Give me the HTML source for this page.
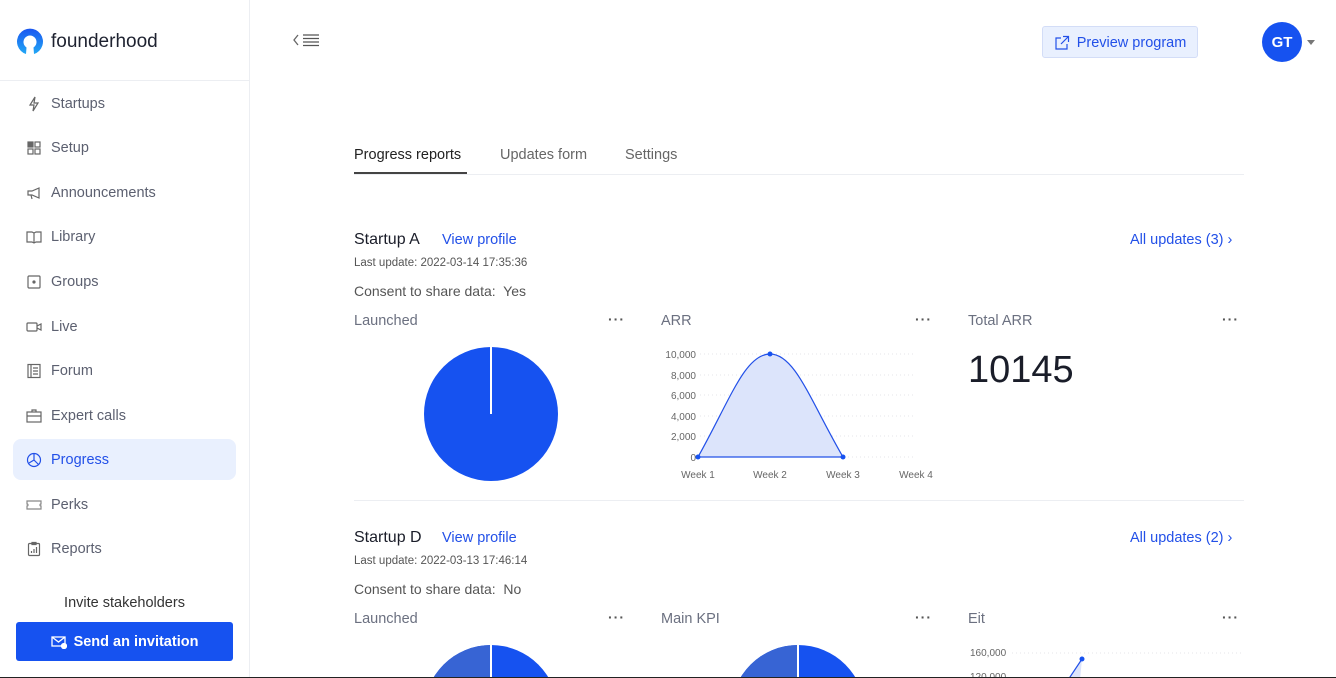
<!DOCTYPE html>
<html style="overflow:hidden;width:1336px;height:678px"><head><meta charset="utf-8"><style>
*{box-sizing:border-box;margin:0;padding:0}
body{width:1336px;height:678px;overflow:hidden;background:#fff;font-family:"Liberation Sans",sans-serif;position:relative;color:#333}
.a{position:absolute;white-space:nowrap}
.side{position:absolute;left:0;top:0;width:250px;height:678px;border-right:1px solid #eceef2}
.nav{position:absolute;left:26px;font-size:14.5px;color:#5c6070;display:flex;align-items:center}
.nav svg{width:16px;height:16px;margin-right:9px}
.g{color:#6b7080;font-size:14px}
.dots{position:absolute;font-size:14px;color:#555;letter-spacing:1px;font-weight:bold}
</style></head><body>
<div class="side">
 <svg class="a" style="left:16px;top:28px" width="28" height="28" viewBox="0 0 28 28"><defs><linearGradient id="lg" x1="0" y1="0" x2="0" y2="1"><stop offset="0" stop-color="#1a56f0"/><stop offset="1" stop-color="#22a8f5"/></linearGradient></defs><path d="M10 26 A13 13 0 1 1 18 26 L17.5 19.5 A6.5 6.5 0 1 0 10.5 19.5 Z" fill="url(#lg)"/></svg>
 <div class="a" style="left:51px;top:31px;font-size:19px;color:#1e2230">founderhood</div>
 <div class="a" style="left:0;top:80px;width:249px;height:1px;background:#eceef2"></div>
 <div class="a" style="left:13px;top:439px;width:223px;height:41px;background:#e9f0fe;border-radius:8px"></div>
 <div class="nav" style="top:96px"><svg viewBox="0 0 16 16" fill="none" stroke="#666" stroke-width="1.2"><path d="M9 1 4 9h4l-1 6 5-8H8z"/></svg>Startups</div>
 <div class="nav" style="top:140px"><svg viewBox="0 0 16 16" fill="none" stroke="#666" stroke-width="1.2"><rect x="2" y="2" width="5" height="5" fill="#666"/><rect x="9" y="2" width="5" height="5"/><rect x="2" y="9" width="5" height="5"/><rect x="9" y="9" width="5" height="5"/></svg>Setup</div>
 <div class="nav" style="top:185px"><svg viewBox="0 0 16 16" fill="none" stroke="#666" stroke-width="1.2"><path d="M2 6h4l7-3v10L6 10H2zM5 10l1 4"/></svg>Announcements</div>
 <div class="nav" style="top:229px"><svg viewBox="0 0 16 16" fill="none" stroke="#666" stroke-width="1.2"><path d="M1 3h5l2 1 2-1h5v10h-5l-2 1-2-1H1zM8 4v10"/></svg>Library</div>
 <div class="nav" style="top:274px"><svg viewBox="0 0 16 16" fill="none" stroke="#666" stroke-width="1.2"><rect x="2" y="2" width="12" height="12" rx="1"/><circle cx="8" cy="8" r="1" fill="#666"/></svg>Groups</div>
 <div class="nav" style="top:319px"><svg viewBox="0 0 16 16" fill="none" stroke="#666" stroke-width="1.2"><rect x="1" y="4" width="10" height="8" rx="1"/><path d="M11 7l4-2v6l-4-2"/></svg>Live</div>
 <div class="nav" style="top:363px"><svg viewBox="0 0 16 16" fill="none" stroke="#666" stroke-width="1.2"><rect x="2" y="1.5" width="12" height="13"/><path d="M5 2v12M7 5h5M7 8h5M7 11h5"/></svg>Forum</div>
 <div class="nav" style="top:408px"><svg viewBox="0 0 16 16" fill="none" stroke="#666" stroke-width="1.2"><rect x="1" y="4" width="14" height="10"/><path d="M6 4V2h4v2M1 8h14"/></svg>Expert calls</div>
 <div class="nav" style="top:452px;color:#2250e8"><svg viewBox="0 0 16 16" fill="none" stroke="#2250e8" stroke-width="1.2"><circle cx="8" cy="8" r="6.5"/><path d="M8 1.5V8l4.5 4.5M8 8l-5 3"/></svg>Progress</div>
 <div class="nav" style="top:497px"><svg viewBox="0 0 16 16" fill="none" stroke="#888" stroke-width="1.2"><path d="M1 4h14v3a1 1 0 0 0 0 2v3H1V9a1 1 0 0 0 0-2z"/></svg>Perks</div>
 <div class="nav" style="top:541px"><svg viewBox="0 0 16 16" fill="none" stroke="#666" stroke-width="1.2"><rect x="2.5" y="2.5" width="11" height="12" rx="1"/><path d="M6 1.5h4v2H6zM5.5 12v-2M8 12V8M10.5 12V6"/></svg>Reports</div>
 <div class="a" style="left:0;width:249px;top:595px;text-align:center;font-size:14.5px;color:#333">Invite stakeholders</div>
 <div class="a" style="left:16px;top:622px;width:217px;height:39px;background:#1652f0;border-radius:3px;color:#fff;font-weight:bold;font-size:14.5px;display:flex;align-items:center;justify-content:center"><svg width="16" height="14" viewBox="0 0 16 14" fill="none" stroke="#fff" stroke-width="1.3" style="margin-right:7px"><rect x="1" y="2" width="13" height="9"/><path d="M1 2l6.5 5L14 2"/><circle cx="13" cy="11" r="2.5" fill="#fff"/></svg>Send an invitation</div>
</div>
<svg class="a" style="left:291px;top:32px" width="30" height="16" viewBox="0 0 30 16" fill="none" stroke="#666" stroke-width="1.3"><path d="M7 3 3 8l4 5"/><path d="M12 3h16M12 6.5h16M12 10h16M12 13.5h16" stroke="#555"/></svg>
<div class="a" style="left:1042px;top:26px;width:156px;height:32px;background:#e9f0fe;border:1px solid #d3ddf7;border-radius:3px;color:#2250e8;font-size:14.5px;display:flex;align-items:center;justify-content:center;padding-top:1px"><svg width="16" height="16" viewBox="0 0 16 16" fill="none" stroke="#2250e8" stroke-width="1.2" style="margin-right:7px"><path d="M7 3H2v11h11V9M9 1.5h5.5V7M14.5 1.5 7 9"/></svg>Preview program</div>
<div class="a" style="left:1262px;top:22px;width:40px;height:40px;border-radius:50%;background:#1652f0;color:#fff;font-weight:bold;font-size:15px;text-align:center;line-height:41px">GT</div>
<div class="a" style="left:1307px;top:40px;border-left:4px solid transparent;border-right:4px solid transparent;border-top:5px solid #777"></div>

<div class="a" style="left:354px;top:147px;font-size:14.5px;color:#222">Progress reports</div>
<div class="a" style="left:500px;top:147px;font-size:14.5px;color:#666">Updates form</div>
<div class="a" style="left:625px;top:147px;font-size:14.5px;color:#666">Settings</div>
<div class="a" style="left:354px;top:174px;width:890px;height:1px;background:#eceef2"></div>
<div class="a" style="left:354px;top:172px;width:113px;height:2px;background:#444"></div>

<div class="a" style="left:354px;top:231px;font-size:16px;color:#1a1d29">Startup A</div>
<div class="a" style="left:442px;top:232px;font-size:14.5px;color:#2250e8">View profile</div>
<div class="a" style="left:1130px;top:232px;font-size:14.5px;color:#2250e8">All updates (3) ›</div>
<div class="a" style="left:354px;top:257px;font-size:11.5px;color:#555">Last update: 2022-03-14 17:35:36</div>
<div class="a g" style="left:354px;top:283px;color:#555">Consent to share data:&nbsp; Yes</div>
<div class="a g" style="left:354px;top:313px;font-size:14.5px">Launched</div>
<div class="dots" style="left:608px;top:311px">···</div>
<div class="a g" style="left:661px;top:313px;font-size:14.5px">ARR</div>
<div class="dots" style="left:915px;top:311px">···</div>
<div class="a g" style="left:968px;top:313px;font-size:14.5px">Total ARR</div>
<div class="dots" style="left:1222px;top:311px">···</div>
<svg class="a" style="left:424px;top:347px" width="136" height="136"><circle cx="67" cy="67" r="67" fill="#1652f0"/><line x1="67" y1="0" x2="67" y2="67" stroke="#fff" stroke-width="2"/></svg>
<svg class="a" style="left:650px;top:340px" width="300" height="150" font-family="Liberation Sans" font-size="10" fill="#666">
 <g stroke="#e4e6ea" stroke-dasharray="1 3"><line x1="50" y1="14" x2="265" y2="14"/><line x1="50" y1="35" x2="265" y2="35"/><line x1="50" y1="55" x2="265" y2="55"/><line x1="50" y1="76" x2="265" y2="76"/><line x1="50" y1="96" x2="265" y2="96"/><line x1="50" y1="117" x2="265" y2="117"/></g>
 <g text-anchor="end"><text x="46" y="18">10,000</text><text x="46" y="39">8,000</text><text x="46" y="59">6,000</text><text x="46" y="80">4,000</text><text x="46" y="100">2,000</text><text x="46" y="121">0</text></g>
 <g text-anchor="middle"><text x="48" y="138">Week 1</text><text x="120" y="138">Week 2</text><text x="193" y="138">Week 3</text><text x="266" y="138">Week 4</text></g>
 <path d="M48 117 C80 60 95 14 120 14 C145 14 160 60 193 117Z" fill="#dce4fb" stroke="#2250e8" stroke-width="1.2"/>
 <circle cx="48" cy="117" r="2.5" fill="#1652f0"/><circle cx="120" cy="14" r="2.5" fill="#1652f0"/><circle cx="193" cy="117" r="2.5" fill="#1652f0"/>
</svg>
<div class="a" style="left:968px;top:349px;font-size:38px;color:#1a1d29">10145</div>
<div class="a" style="left:354px;top:500px;width:890px;height:1px;background:#eceef2"></div>

<div class="a" style="left:354px;top:529px;font-size:16px;color:#1a1d29">Startup D</div>
<div class="a" style="left:442px;top:530px;font-size:14.5px;color:#2250e8">View profile</div>
<div class="a" style="left:1130px;top:530px;font-size:14.5px;color:#2250e8">All updates (2) ›</div>
<div class="a" style="left:354px;top:555px;font-size:11.5px;color:#555">Last update: 2022-03-13 17:46:14</div>
<div class="a g" style="left:354px;top:581px;color:#555">Consent to share data:&nbsp; No</div>
<div class="a g" style="left:354px;top:611px;font-size:14.5px">Launched</div>
<div class="dots" style="left:608px;top:609px">···</div>
<div class="a g" style="left:661px;top:611px;font-size:14.5px">Main KPI</div>
<div class="dots" style="left:915px;top:609px">···</div>
<div class="a g" style="left:968px;top:611px;font-size:14.5px">Eit</div>
<div class="dots" style="left:1222px;top:609px">···</div>
<svg class="a" style="left:424px;top:645px" width="136" height="32"><circle cx="67" cy="67" r="67" fill="#1652f0"/><path d="M67 67V0A67 67 0 0 0 0 67z" fill="#3764d4"/><line x1="67" y1="0" x2="67" y2="67" stroke="#fff" stroke-width="2"/></svg>
<svg class="a" style="left:731px;top:645px" width="136" height="32"><circle cx="67" cy="67" r="67" fill="#1652f0"/><path d="M67 67V0A67 67 0 0 0 0 67z" fill="#3764d4"/><line x1="67" y1="0" x2="67" y2="67" stroke="#fff" stroke-width="2"/></svg>
<svg class="a" style="left:960px;top:640px" width="290" height="37" font-family="Liberation Sans" font-size="10" fill="#666">
 <line x1="52" y1="13" x2="282" y2="13" stroke="#e4e6ea" stroke-dasharray="1 3"/>
 <text x="10" y="16">160,000</text><text x="10" y="40">120,000</text>
 <path d="M120 40 L122 19 L108 40Z" fill="#dce4fb"/><path d="M108 40 L122 19" stroke="#2250e8" stroke-width="1.2"/><circle cx="122" cy="19" r="2.5" fill="#1652f0"/>
</svg>
<div class="a" style="left:0;top:677px;width:1336px;height:1px;background:#222"></div>
</body></html>
